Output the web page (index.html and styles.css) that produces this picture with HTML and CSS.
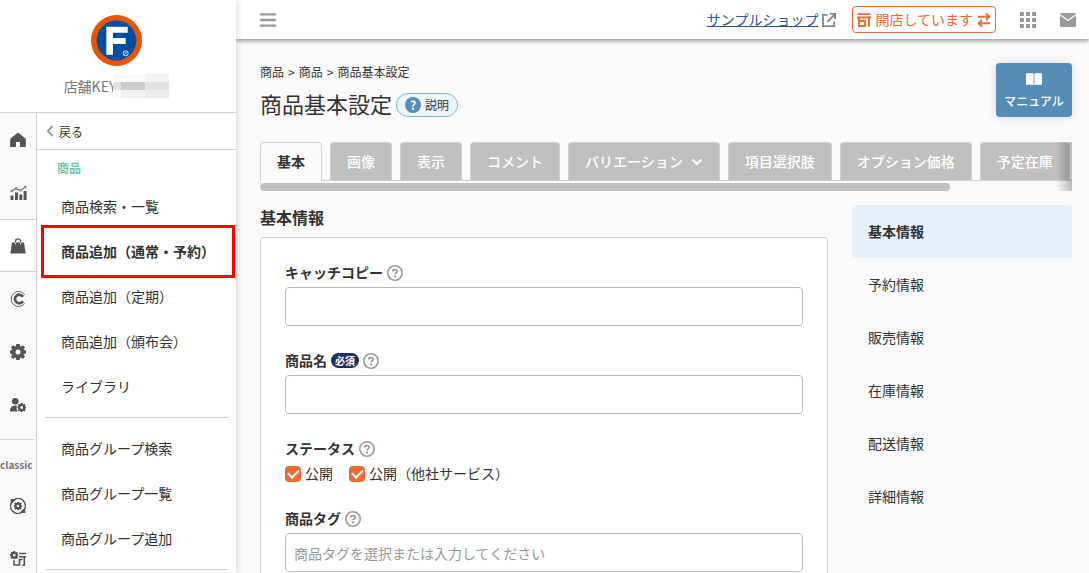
FILE: index.html
```html
<!DOCTYPE html>
<html lang="ja">
<head>
    <meta charset="UTF-8">
    <meta name="viewport" content="width=device-width, initial-scale=1.0">
    <title>商品基本設定</title>
    <link rel="stylesheet" href="styles.css">
</head>
<body>
    <!-- shared icons -->
    <svg class="defs" width="0" height="0">
        <symbol id="icon-help" viewBox="0 0 16 16">
            <circle cx="8" cy="8" r="7.2" fill="none" stroke="currentColor" stroke-width="1.6"/>
            <path d="M5.8 6.4C5.8 4 10.2 4 10.2 6.3c0 1.5-2.1 1.4-2.1 3" fill="none" stroke="currentColor" stroke-width="1.7"/>
            <circle cx="8.1" cy="11.4" r="1.1" fill="currentColor"/>
        </symbol>
        <symbol id="icon-gear" viewBox="0 0 16 16">
            <path fill="currentColor" fill-rule="evenodd" d="M6.2 0h3.600l.3 2.200 1 .4L12.800 1.200l2.200 2.200-1.300 1.700.4 1 1.900.3v3.200l-1.900.3-.4 1 1.300 1.800-2.200 2.200-1.800-1.300-1 .4-.3 2H6.200l-.3-2-1-.4-1.800 1.300L.9 12.700l1.300-1.800-.4-1L0 9.600V6.400l1.800-.3.4-1L.9 3.400l2.200-2.200 1.800 1.300 1-.4zM8 5.500a2.500 2.500 0 1 0 0 5 2.500 2.500 0 0 0 0-5z"/>
        </symbol>
    </svg>

    <div class="layout">
        <aside class="sidebar">
            <div class="shop">
                <svg class="shop-logo" viewBox="0 0 50 50" width="51" height="51">
                    <circle cx="25" cy="25" r="25" fill="#ea5504"/>
                    <circle cx="25" cy="25" r="19.500" fill="#004ea2"/>
                    <path d="M15 11.500h21v6H21.500v5H34v6H21.500v10.500H15z" fill="#fff"/>
                    <circle cx="34" cy="37.500" r="2.400" fill="none" stroke="#b5cbe4" stroke-width="1"/>
                    <path d="M32.500 36l3 3M35.500 36l-3 3" stroke="#b5cbe4" stroke-width=".8"/>
                </svg>
                <div class="shop-key">
                    <span>店舗KEY</span>
                    <svg class="shop-mask" viewBox="0 0 56 24" width="56" height="24">
                        <path fill="#f9f9f9" d="M0 0h56v24H0z"/>
                        <path fill="#f2f2f2" d="M32 0h24v8H32zM8 16h24v8H8z"/>
                        <path fill="#ebebeb" d="M32 16h24v8H32z"/>
                        <path fill="#e2e2e2" d="M0 8h56v8H0z"/>
                        <path fill="#cdcdcd" d="M8 8h24v8H8z"/>
                    </svg>
                </div>
            </div>
            <div class="sidebar-body">
                <nav class="rail" aria-label="メイン">
                    <a href="#" class="rail-item" aria-label="ホーム">
                        <svg viewBox="0 0 16 16" width="16" height="16"><path fill="currentColor" d="M8 .5l7.800 6.300V15H10v-5H6v5H.2V6.800z"/></svg>
                    </a>
                    <a href="#" class="rail-item" aria-label="分析">
                        <svg viewBox="0 0 17 16" width="17" height="16">
                            <path fill="currentColor" d="M.5 10.500h3v4.500h-3zM5 7.500h3v7.500H5zM9.300 9.500h3V15h-3zM13.600 6h3v9h-3z"/>
                            <path d="M1.500 6L6 3.500l4.500 2L15.500 2" fill="none" stroke="currentColor"/>
                            <g fill="#fafafa" stroke="currentColor" stroke-width=".8"><circle cx="1.800" cy="6" r="1"/><circle cx="6" cy="3.500" r="1"/><circle cx="10.500" cy="5.300" r="1"/><circle cx="15.300" cy="2" r="1"/></g>
                        </svg>
                    </a>
                    <a href="#" class="rail-item is-active" aria-label="商品">
                        <svg viewBox="0 0 16 16" width="16" height="16">
                            <path fill="currentColor" d="M2 4.500h12l1.700 11H.3z"/>
                            <path d="M5.500 6V3.300a2.500 2.500 0 0 1 5 0V6" fill="none" stroke="currentColor" stroke-width="1.200"/>
                            <path d="M5.500 4.700v1.600M10.500 4.700v1.600" stroke="#fff"/>
                        </svg>
                    </a>
                    <a href="#" class="rail-item" aria-label="定期">
                        <svg viewBox="0 0 16 16" width="16" height="16" fill="none" stroke="currentColor">
                            <path d="M13 5.800A4.300 4.300 0 1 0 13 10.200" stroke-width="2.800"/>
                            <path d="M14.800 3.600A7.500 7.500 0 1 0 14.800 12.400" stroke-width=".9"/>
                        </svg>
                    </a>
                    <a href="#" class="rail-item" aria-label="設定">
                        <svg width="16" height="16"><use href="#icon-gear"/></svg>
                    </a>
                    <a href="#" class="rail-item" aria-label="会員設定">
                        <svg viewBox="0 0 16 16" width="16" height="16">
                            <circle cx="5.200" cy="4.200" r="3.300" fill="currentColor"/>
                            <path fill="currentColor" d="M0 14.500c0-4 2-6 5.500-6 .8 0 1.300.1 1.500.3-.8 2-.6 4 .8 5.700z"/>
                            <svg x="7.200" y="6" width="9" height="9"><use href="#icon-gear"/></svg>
                        </svg>
                    </a>
                    <hr class="rail-line">
                    <p class="rail-label">classic</p>
                    <a href="#" class="rail-item" aria-label="classic 設定">
                        <svg viewBox="0 0 16 16" width="16" height="16">
                            <path d="M4 1.900A7.200 7.200 0 0 1 14 12M12 14.100A7.200 7.200 0 0 1 2 4" fill="none" stroke="currentColor" stroke-width="1.500"/>
                            <path fill="currentColor" d="M.5 1h4.800v1.500L2.500 5H1zM15.500 15h-4.800v-1.500l2.800-2.500H15z"/>
                            <svg x="3.700" y="3.700" width="8.600" height="8.600"><use href="#icon-gear"/></svg>
                        </svg>
                    </a>
                    <a href="#" class="rail-item" aria-label="店舗設定">
                        <svg viewBox="0 0 16 16" width="16" height="16">
                            <svg x="0" y="0" width="8.500" height="8.500"><use href="#icon-gear"/></svg>
                            <path d="M9 2.500h7M9 5.800h7M14.300 6v8.200h-2M4 9.500v4.500h5.500V8.500h3" fill="none" stroke="currentColor" stroke-width="1.600"/>
                        </svg>
                    </a>
                </nav>
                <nav class="menu" aria-label="商品">
                    <a href="#" class="menu-back">
                        <svg viewBox="0 0 8 12" width="8" height="12"><path d="M6.500 1L2 6l4.500 5" fill="none" stroke="#999" stroke-width="2"/></svg>
                        戻る
                    </a>
                    <h2 class="menu-title">商品</h2>
                    <ul class="menu-list">
                        <li><a href="#">商品検索・一覧</a></li>
                        <li class="is-current"><a href="#">商品追加（通常・予約）</a></li>
                        <li><a href="#">商品追加（定期）</a></li>
                        <li><a href="#">商品追加（頒布会）</a></li>
                        <li><a href="#">ライブラリ</a></li>
                    </ul>
                    <ul class="menu-list">
                        <li><a href="#">商品グループ検索</a></li>
                        <li><a href="#">商品グループ一覧</a></li>
                        <li><a href="#">商品グループ追加</a></li>
                    </ul>
                    <ul class="menu-list"></ul>
                </nav>
            </div>
        </aside>

        <div class="page">
            <header class="topbar">
                <button type="button" class="icon-button" aria-label="メニュー">
                    <svg viewBox="0 0 16 14" width="16" height="14"><path d="M1 1.300h14M1 7h14M1 12.700h14" stroke="currentColor" stroke-width="2.300" stroke-linecap="round"/></svg>
                </button>
                <div class="topbar-right">
                    <a href="#" class="shop-link">
                        <span>サンプルショップ</span>
                        <svg viewBox="0 0 15 15" width="14" height="14" fill="none" stroke="currentColor" stroke-width="2"><path d="M6 2H1v12h12V9M8.500 1H14v5.500M14 1L6 9.500"/></svg>
                    </a>
                    <button type="button" class="status-button">
                        <svg viewBox="0 0 14 14" width="14" height="14" fill="none" stroke="currentColor" stroke-width="1.800"><path d="M.5 1.200h13M0 4.500h14M2 5v8h6V8H2M12 5v8.800"/></svg>
                        開店しています
                        <svg viewBox="0 0 14 14" width="14" height="14" fill="none" stroke="currentColor" stroke-width="2"><path d="M1 3.700h11M9 .5L12.300 3.700 9 7M13 10.300H2M5 7L1.700 10.300 5 13.500"/></svg>
                    </button>
                    <button type="button" class="icon-button" aria-label="アプリ一覧">
                        <svg viewBox="0 0 16 16" width="16" height="16"><path fill="currentColor" d="M0 0h4v4H0zM6 0h4v4H6zM12 0h4v4h-4zM0 6h4v4H0zM6 6h4v4H6zM12 6h4v4h-4zM0 12h4v4H0zM6 12h4v4H6zM12 12h4v4h-4z"/></svg>
                    </button>
                    <button type="button" class="icon-button" aria-label="メール">
                        <svg viewBox="0 0 16 14" width="16" height="14"><rect width="16" height="14" rx="1.500" fill="currentColor"/><path d="M.5 2L8 7.500 15.500 2" fill="none" stroke="#fff" stroke-width="1.300"/></svg>
                    </button>
                </div>
            </header>

            <main class="content">
                <div class="page-head">
                    <div>
                        <p class="breadcrumb"><span>商品</span><span>&gt;</span><span>商品</span><span>&gt;</span><span>商品基本設定</span></p>
                        <div class="page-title">
                            <h1>商品基本設定</h1>
                            <button type="button" class="help-pill"><span class="help-mark">?</span>説明</button>
                        </div>
                    </div>
                    <button type="button" class="manual-button">
                        <svg viewBox="0 0 16 12" width="16" height="12"><path fill="#fff" d="M0 .6C2.500-.2 5.500-.2 7.600.6V12C5.500 11.500 2.500 11.500 0 12zM16 .6C13.500-.2 10.500-.2 8.400.6V12c2.100-.5 5.100-.5 7.600 0z"/></svg>
                        マニュアル
                    </button>
                </div>

                <div class="tabs-wrap">
                    <nav class="tabs">
                        <a href="#" class="tab is-active">基本</a>
                        <a href="#" class="tab">画像</a>
                        <a href="#" class="tab">表示</a>
                        <a href="#" class="tab">コメント</a>
                        <a href="#" class="tab">バリエーション
                            <svg viewBox="0 0 12 8" width="12" height="8"><path d="M1.500 1.500L6 6l4.500-4.500" fill="none" stroke="currentColor" stroke-width="2.200"/></svg>
                        </a>
                        <a href="#" class="tab">項目選択肢</a>
                        <a href="#" class="tab">オプション価格</a>
                        <a href="#" class="tab">予定在庫</a>
                    </nav>
                    <div class="tabs-scroll"></div>
                </div>

                <div class="columns">
                    <section class="main-column">
                        <h2 class="section-title">基本情報</h2>
                        <form class="card">
                            <div class="field">
                                <div class="field-head">
                                    <label for="catch-copy">キャッチコピー</label>
                                    <svg class="help-icon"><use href="#icon-help"/></svg>
                                </div>
                                <input type="text" id="catch-copy" class="text-input">
                            </div>
                            <div class="field">
                                <div class="field-head">
                                    <label for="item-name">商品名</label>
                                    <span class="required">必須</span>
                                    <svg class="help-icon"><use href="#icon-help"/></svg>
                                </div>
                                <input type="text" id="item-name" class="text-input" required>
                            </div>
                            <div class="field" role="group" aria-labelledby="status-label">
                                <div class="field-head">
                                    <span id="status-label">ステータス</span>
                                    <svg class="help-icon"><use href="#icon-help"/></svg>
                                </div>
                                <div class="checks">
                                    <label class="check"><input type="checkbox" checked>公開</label>
                                    <label class="check"><input type="checkbox" checked>公開（他社サービス）</label>
                                </div>
                            </div>
                            <div class="field">
                                <div class="field-head">
                                    <label for="item-tag">商品タグ</label>
                                    <svg class="help-icon"><use href="#icon-help"/></svg>
                                </div>
                                <input type="text" id="item-tag" class="text-input" placeholder="商品タグを選択または入力してください">
                            </div>
                        </form>
                    </section>
                    <nav class="section-nav" aria-label="ページ内">
                        <a href="#" class="is-active">基本情報</a>
                        <a href="#">予約情報</a>
                        <a href="#">販売情報</a>
                        <a href="#">在庫情報</a>
                        <a href="#">配送情報</a>
                        <a href="#">詳細情報</a>
                    </nav>
                </div>
            </main>
        </div>
    </div>
</body>
</html>
```
FILE: styles.css
```css
* {
    box-sizing: border-box;
}

body {
    margin: 0;
    font-family: "Noto Sans CJK JP", "Noto Sans", sans-serif;
    font-size: 14px;
    line-height: 21px;
    color: #333;
    background-color: #fafafa;
}

h1, h2, p, ul {
    margin: 0;
    padding: 0;
}

ul {
    list-style: none;
}

a {
    color: inherit;
    text-decoration: none;
}

button, input {
    font: inherit;
    color: inherit;
}

button {
    padding: 0;
    border: none;
    background: none;
    cursor: pointer;
}

svg {
    display: block;
    flex: none;
}

.defs {
    position: absolute;
}

.layout {
    display: flex;
    height: 100vh;
    overflow: hidden;
}

/* sidebar */
.sidebar {
    display: flex;
    flex-direction: column;
    flex: none;
    width: 236px;
    background-color: #fff;
    box-shadow: 0 0 8px rgba(0, 0, 0, 0.2);
    z-index: 2;
}

.shop {
    display: flex;
    flex-direction: column;
    align-items: center;
    padding: 15px 3px 14px 0;
    border-bottom: 1px solid #d0d0d0;
}

.shop-key {
    display: flex;
    align-items: center;
    margin-top: 8px;
    color: #777;
}

.shop-mask {
    margin-left: -3px;
}

.sidebar-body {
    display: flex;
    flex: 1;
    min-height: 0;
}

.rail {
    flex: none;
    width: 37px;
    overflow: hidden;
    background-color: #fafafa;
    border-right: 1px solid #d0d0d0;
    color: #555;
}

.rail-item {
    display: flex;
    align-items: center;
    justify-content: center;
    height: 53px;
}

.rail-item.is-active {
    background-color: #fff;
    border-top: 1px solid #d0d0d0;
    border-bottom: 1px solid #d0d0d0;
}

.rail-line {
    margin: 8px 2px 0 0;
    border: none;
    border-top: 1px solid #d0d0d0;
}

.rail-label {
    padding: 14px 0 4px;
    font-size: 10px;
    font-weight: bold;
    color: #777;
}

.menu {
    flex: 1;
    min-width: 0;
}

.menu-back {
    display: flex;
    align-items: center;
    gap: 5px;
    height: 37px;
    padding-left: 9px;
    border-bottom: 1px solid #d0d0d0;
    font-size: 12px;
}

.menu-title {
    padding: 7px 20px 6px;
    font-size: 12px;
    color: #6ec8a8;
}

.menu-list {
    margin: 0 8px;
    padding-bottom: 8px;
}

.menu-list + .menu-list {
    padding-top: 8px;
    border-top: 1px solid #d0d0d0;
}

.menu-list a {
    display: block;
    padding: 12px 0 12px 16px;
    white-space: nowrap;
}

.menu-list .is-current {
    position: relative;
    font-weight: bold;
}

.menu-list .is-current::after {
    content: "";
    position: absolute;
    inset: -4px -7px -4px -4px;
    border: 3px solid #f00;
    pointer-events: none;
}

/* top bar */
.page {
    display: flex;
    flex-direction: column;
    flex: 1;
    min-width: 0;
}

.topbar {
    display: flex;
    align-items: center;
    justify-content: space-between;
    flex: none;
    height: 39px;
    padding: 0 13px 0 16px;
    background-color: #fff;
    box-shadow: 0 2px 4px rgba(0, 0, 0, 0.4);
    z-index: 1;
}

.topbar-right {
    display: flex;
    align-items: center;
}

.icon-button {
    display: flex;
    padding: 8px;
    color: #999;
}

.topbar-right .icon-button {
    padding: 8px 0 8px 24px;
}

.shop-link {
    display: flex;
    align-items: center;
    gap: 4px;
    margin-right: 16px;
    color: #888;
}

.shop-link span {
    color: #2f5597;
    text-decoration: underline;
}

.status-button {
    display: flex;
    align-items: center;
    gap: 4px;
    height: 27px;
    padding: 0 4px;
    border: 1px solid #e96b35;
    border-radius: 4px;
    color: #e96b35;
}

/* page head */
.content {
    flex: 1;
    padding: 24px 17px 24px 24px;
    overflow-y: auto;
    scrollbar-width: none;
}

.page-head {
    display: flex;
    align-items: flex-start;
    justify-content: space-between;
}

.breadcrumb {
    display: flex;
    gap: 4px;
    font-size: 12px;
    line-height: 18px;
}

.page-title {
    display: flex;
    align-items: center;
    gap: 4px;
    margin-top: 7px;
}

.page-title h1 {
    padding-bottom: 3px;
    font-size: 22px;
    font-weight: normal;
    line-height: 30px;
}

.help-pill {
    display: flex;
    align-items: center;
    gap: 4px;
    height: 24px;
    padding: 0 8px;
    border: 1px solid #7db5dc;
    border-radius: 12px;
    background-color: #eef5fc;
    font-size: 12px;
}

.help-mark {
    width: 16px;
    border-radius: 50%;
    background-color: #558db7;
    color: #fff;
    font-weight: bold;
    line-height: 16px;
}

.manual-button {
    display: flex;
    flex-direction: column;
    align-items: center;
    gap: 5px;
    width: 76px;
    height: 54px;
    padding-top: 10px;
    border-radius: 4px;
    background-color: #558db7;
    box-shadow: 0 0 8px rgba(0, 0, 0, 0.15);
    color: #fff;
    font-size: 12px;
    font-weight: 500;
}

/* tabs */
.tabs-wrap {
    position: relative;
    margin: 21px 0 14px;
    overflow: hidden;
}

.tabs-wrap::after {
    content: "";
    position: absolute;
    inset: 0 0 0 auto;
    width: 16px;
    background: linear-gradient(to right, rgba(0, 0, 0, 0), rgba(0, 0, 0, 0.25));
}

.tabs {
    display: flex;
    gap: 8px;
    border-bottom: 1px solid #d0d0d0;
}

.tab {
    display: flex;
    align-items: center;
    flex: none;
    gap: 8px;
    height: 38px;
    padding: 0 16px;
    border: 1px solid #d0d0d0;
    border-bottom: none;
    border-radius: 4px 4px 0 0;
    background-color: #c0c0c0;
    color: #fff;
    font-weight: 500;
}

.tab.is-active {
    height: 39px;
    margin-bottom: -1px;
    padding-bottom: 2px;
    background-color: #fafafa;
    color: #333;
    font-weight: bold;
}

.tabs-scroll {
    width: 85%;
    height: 8px;
    margin-top: 2px;
    border-radius: 4px;
    background-color: #c0c0c0;
}

/* form */
.columns {
    display: flex;
    align-items: flex-start;
    gap: 24px;
}

.main-column {
    flex: 1;
}

.section-title {
    margin-bottom: 8px;
    font-size: 16px;
    line-height: 24px;
}

.card {
    display: flex;
    flex-direction: column;
    gap: 24px;
    padding: 24px;
    border: 1px solid #d0d0d0;
    border-radius: 4px;
    background-color: #fff;
}

.field-head {
    display: flex;
    align-items: center;
    gap: 4px;
    margin-bottom: 4px;
    font-weight: bold;
}

.help-icon {
    width: 16px;
    height: 16px;
    color: #999;
}

.required {
    padding: 0 4px;
    border-radius: 8px;
    background-color: #1d2f5c;
    color: #fff;
    font-size: 10px;
    line-height: 15px;
}

.text-input {
    display: block;
    width: 100%;
    height: 39px;
    padding: 0 8px;
    border: 1px solid #bbb;
    border-radius: 4px;
    background-color: #fff;
}

.text-input::placeholder {
    color: #999;
}

.checks {
    display: flex;
    gap: 16px;
}

.check {
    display: flex;
    align-items: center;
    gap: 4px;
}

.check input {
    display: grid;
    place-content: center;
    appearance: none;
    width: 16px;
    height: 16px;
    margin: 0;
    border-radius: 4px;
    background-color: #e96b35;
}

.check input::before {
    content: "";
    width: 9px;
    height: 5px;
    margin-bottom: 3px;
    border: solid #fff;
    border-width: 0 0 2px 2px;
    transform: rotate(-45deg);
}

.section-nav {
    flex: none;
    width: 220px;
}

.section-nav a {
    display: block;
    padding: 16px;
    border-radius: 4px;
}

.section-nav .is-active {
    background-color: #e8f0fa;
    font-weight: bold;
}
```
